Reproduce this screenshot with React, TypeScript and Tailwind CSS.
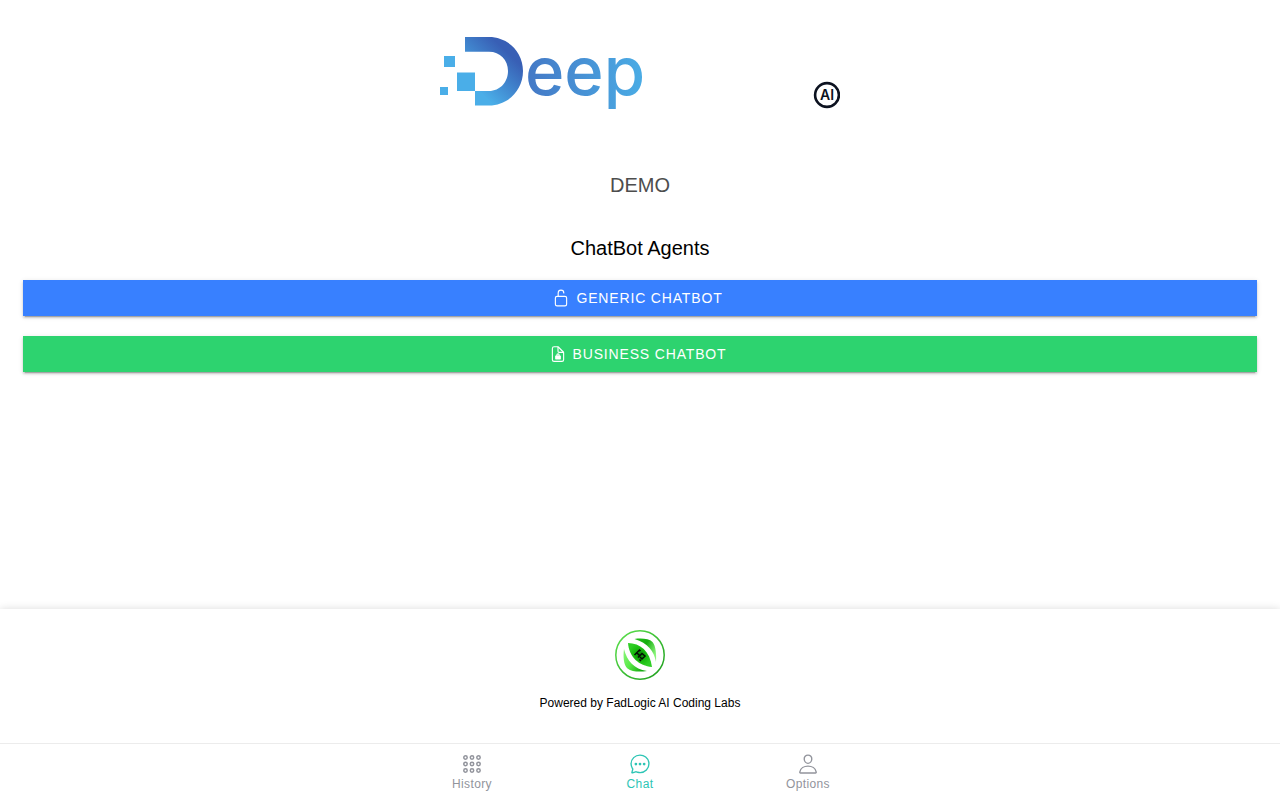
import type { ReactNode } from "react";
import {
  IoChatbubbleEllipsesOutline,
  IoLockOpenOutline,
  IoPersonOutline,
} from "react-icons/io5";
import clsx from "clsx";

function DeepLogo() {
  return (
    <svg viewBox="0 -12 400 96" className="w-[400px] max-w-full" role="img" aria-label="Deep AI">
      <defs>
        <linearGradient id="markFill" gradientUnits="userSpaceOnUse" x1="22" y1="60" x2="66" y2="14">
          <stop offset="0.25" stopColor="#4aaee8" />
          <stop offset="1" stopColor="#385fb5" />
        </linearGradient>
        <linearGradient id="wordFill" gradientUnits="userSpaceOnUse" x1="88" y1="0" x2="203" y2="0">
          <stop offset="0" stopColor="#4479c6" />
          <stop offset="1" stopColor="#4aace5" />
        </linearGradient>
      </defs>
      <g fill="#4aaee8">
        <rect x="4" y="19" width="11" height="11" />
        <rect x="0" y="50" width="8" height="8" />
        <rect x="17" y="35.5" width="18" height="18.5" />
      </g>
      <path
        d="M25 0H49C68 0 83 15 83 34S68 68.500 49 68.500H35V54H49C60 54 68 45 68 34S60 14.800 49 14.800H25Z"
        fill="url(#markFill)"
      />
      <text x="85" y="58" fontSize="67" fontWeight="500" fill="url(#wordFill)" className="font-['Inter',sans-serif]">
        eep
      </text>
      <circle cx="387" cy="58" r="11.900" fill="none" stroke="#0c1220" strokeWidth="2.600" />
      <text x="387" y="63" fontSize="14" fontWeight="600" textAnchor="middle" fill="#0c1220" className="font-['Inter',sans-serif]">
        AI
      </text>
    </svg>
  );
}

function LabsLogo() {
  return (
    <svg viewBox="0 0 50 50" className="size-[50px]" role="img" aria-label="FadLogic">
      <defs>
        <linearGradient id="ring" x1="0" y1="0" x2="1" y2="1">
          <stop offset="0" stopColor="#5fe34f" />
          <stop offset="1" stopColor="#1c9c1c" />
        </linearGradient>
        <linearGradient id="leafTop" x1="0" y1="0" x2="1" y2="0.6">
          <stop offset="0" stopColor="#1fbd17" />
          <stop offset="0.5" stopColor="#17ad10" />
          <stop offset="1" stopColor="#8cf57c" />
        </linearGradient>
        <linearGradient id="leafBottom" x1="0" y1="0" x2="1" y2="0.6">
          <stop offset="0" stopColor="#8cf57c" />
          <stop offset="0.5" stopColor="#5aea48" />
          <stop offset="1" stopColor="#14a80f" />
        </linearGradient>
        <radialGradient id="core">
          <stop offset="0" stopColor="#0c7a08" />
          <stop offset="0.5" stopColor="#18b80e" />
          <stop offset="1" stopColor="#2fce25" />
        </radialGradient>
      </defs>
      <circle cx="25" cy="25" r="24.200" fill="none" stroke="url(#ring)" strokeWidth="1.500" />
      <path d="M19.500 9C26 8 34 8.500 37.500 12C41 16 41.500 25 41 32C39 21 33 13 19.500 9Z" fill="url(#leafTop)" />
      <path d="M9 19C8 26 8.500 35 12.500 38.500C17 42 25 42 32 41C19 39 12 31 9 19Z" fill="url(#leafBottom)" />
      <path d="M13 13C25 13 35 21 37 37C24 36 14 27 13 13Z" fill="url(#core)" />
      <path d="M19.500 25L24.500 20L25.500 21M22 23L24.500 25.500M23 27.500L27 23.500L30 26L27 29L25 27M24.500 29.500L26 31" fill="none" stroke="#031003" strokeWidth="1.500" />
    </svg>
  );
}

function DocumentLockIcon() {
  return (
    <svg viewBox="0 0 512 512" className="size-[18px]" fill="none" stroke="currentColor" strokeWidth="32" strokeLinejoin="round" aria-hidden="true">
      <path d="M416 221.250V416a48 48 0 0 1-48 48H144a48 48 0 0 1-48-48V96a48 48 0 0 1 48-48h98.750a32 32 0 0 1 22.620 9.370l141.260 141.260a32 32 0 0 1 9.370 22.620Z" />
      <path d="M256 56v120a32 32 0 0 0 32 32h120" strokeLinecap="round" />
      <path d="M224 310v-26a32 32 0 0 1 64 0v26" />
      <rect x="174" y="296" width="164" height="116" rx="20" fill="currentColor" stroke="none" />
    </svg>
  );
}

function DotGridIcon({ className }: { className?: string }) {
  const steps = [4.5, 11, 17.5];
  return (
    <svg viewBox="0 0 22 22" className={className} fill="none" stroke="currentColor" strokeWidth="1.500" aria-hidden="true">
      {steps.map((y) => steps.map((x) => <circle key={`${x}-${y}`} cx={x} cy={y} r="1.700" />))}
    </svg>
  );
}

type AgentButtonProps = {
  icon: ReactNode;
  label: string;
  color: string;
};

function AgentButton({ icon, label, color }: AgentButtonProps) {
  return (
    <button
      type="button"
      className={clsx(
        "flex h-9 w-full items-center justify-center gap-1.5 pr-[5px] text-sm tracking-[0.06em] text-white uppercase",
        "shadow-[0_3px_1px_-2px_rgba(0,0,0,0.2),0_2px_2px_0_rgba(0,0,0,0.14),0_1px_5px_0_rgba(0,0,0,0.12)]",
        color
      )}
    >
      {icon}
      {label}
    </button>
  );
}

const tabs = [
  { label: "History", Icon: DotGridIcon },
  { label: "Chat", Icon: IoChatbubbleEllipsesOutline, active: true },
  { label: "Options", Icon: IoPersonOutline },
];

export default function App() {
  return (
    <div className="flex min-h-screen flex-col bg-white font-['Liberation_Sans',Arial,sans-serif] text-black">
      <main className="flex grow flex-col px-[23px] pt-[25px]">
        <div className="flex justify-center">
          <DeepLogo />
        </div>
        <p className="mt-[52px] text-center text-xl leading-6 text-[#4d4d4d]">DEMO</p>
        <h1 className="mt-[39px] text-center text-xl leading-6">ChatBot Agents</h1>
        <div className="mt-5 flex flex-col gap-5">
          <AgentButton label="Generic Chatbot" color="bg-[#3880ff]" icon={<IoLockOpenOutline className="size-[18px]" />} />
          <AgentButton label="Business Chatbot" color="bg-[#2dd36f]" icon={<DocumentLockIcon />} />
        </div>
      </main>

      <footer className="flex h-[134px] flex-col items-center pt-[21px] shadow-[0_0_8px_rgba(0,0,0,0.14)]">
        <LabsLogo />
        <p className="mt-[15px] text-xs">Powered by FadLogic AI Coding Labs</p>
      </footer>

      <nav className="relative flex h-[57px] justify-center border-t border-[#ececec] bg-white">
        {tabs.map(({ label, Icon, active }) => (
          <button
            key={label}
            type="button"
            aria-current={active ? "page" : undefined}
            className={clsx(
              "flex w-[168px] flex-col items-center pt-[9px] text-xs tracking-[0.03em]",
              active ? "text-[#2dc5b5]" : "text-[#92949c]"
            )}
          >
            <Icon className="size-[22px]" />
            <span className="mt-px">{label}</span>
          </button>
        ))}
      </nav>
    </div>
  );
}
